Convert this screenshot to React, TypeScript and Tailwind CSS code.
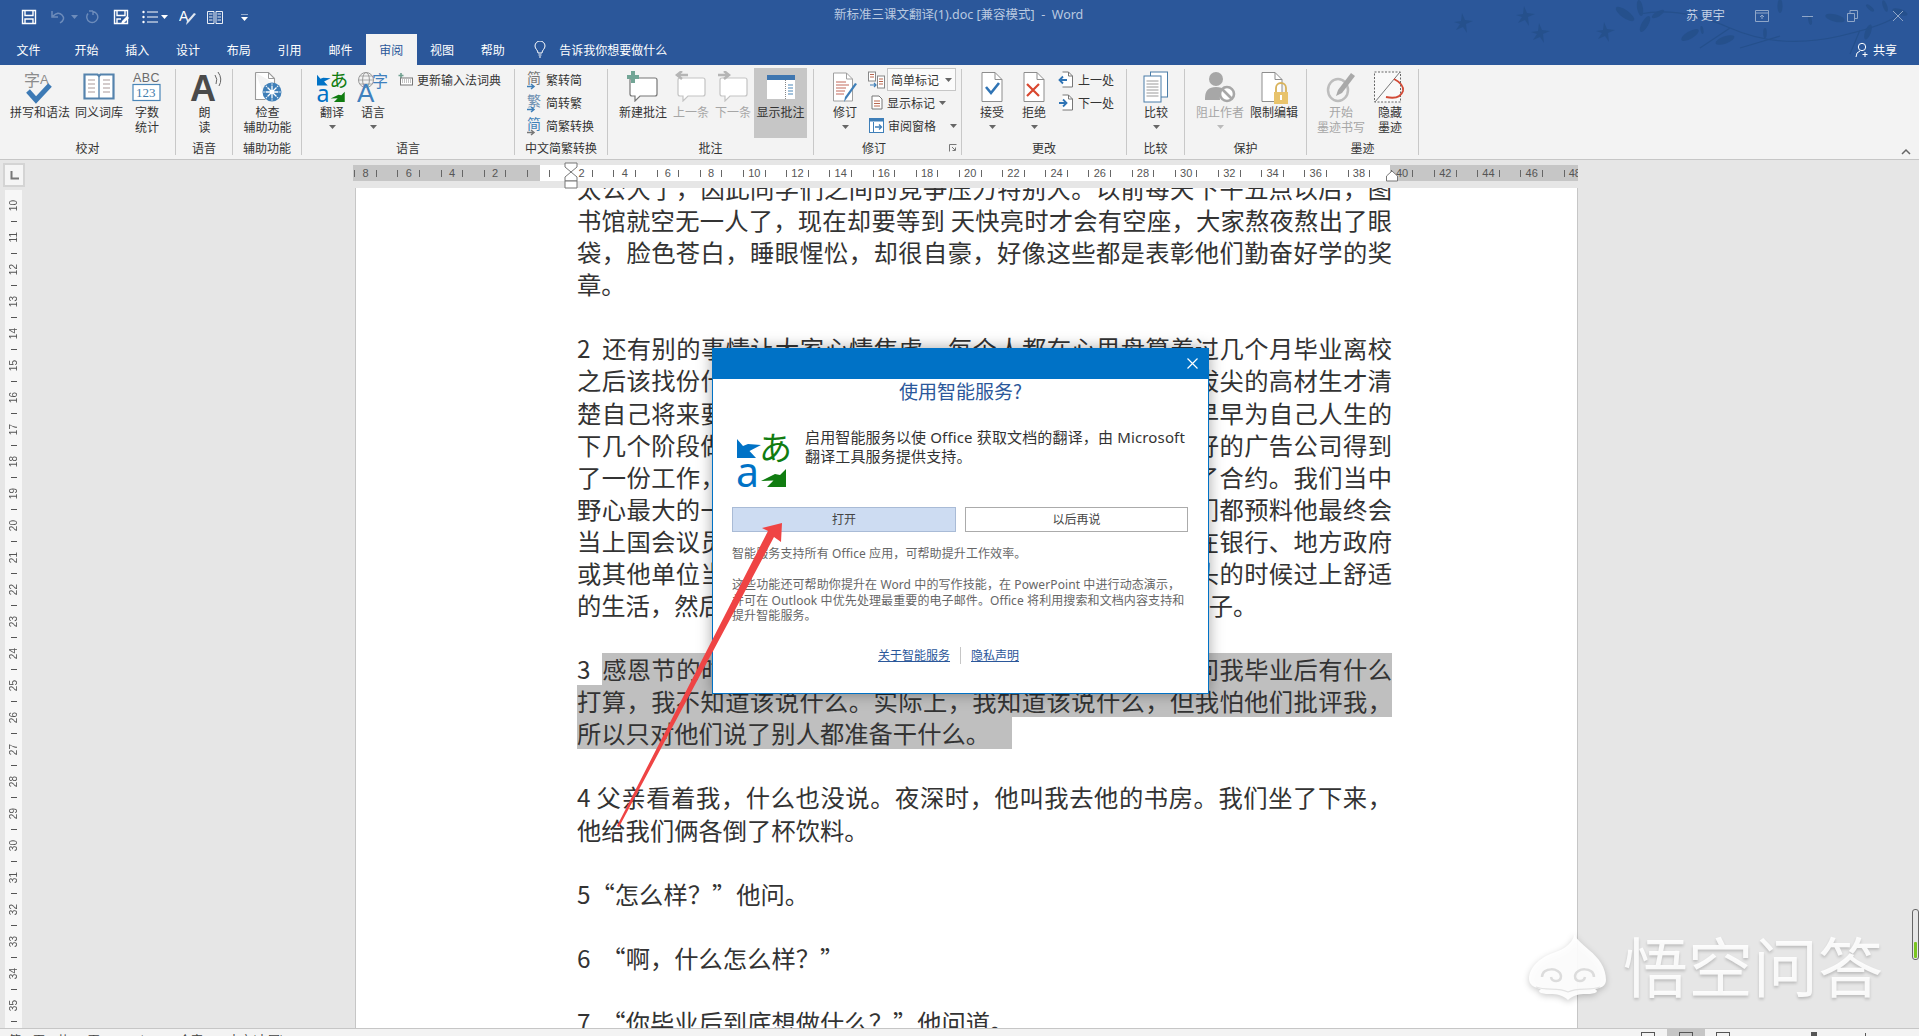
import React from "react";

type SP = { w: number; h: number; children?: React.ReactNode; vb?: string };
const S = ({ w, h, children, vb }: SP) => (
  <svg width={w} height={h} viewBox={vb ?? `0 0 ${w} ${h}`} className="shrink-0 block">{children}</svg>
);
const CJK = "'Noto Sans CJK SC',sans-serif";
const Caret = ({ c = "#666" }: { c?: string }) => (
  <svg width="7" height="4" viewBox="0 0 7 4" className="shrink-0"><path d="M0 0h7L3.5 4z" fill={c} /></svg>
);

/* ---------- ribbon icons ---------- */
const Spell = () => (
  <S w={34} h={33}>
    <text x="1" y="15" fontSize="16" fill="#8c8c8c" fontFamily={CJK}>字</text>
    <text x="17" y="13" fontSize="13" fill="#8c8c8c" fontFamily="'Liberation Sans'">A</text>
    <path d="M5 20l8 9L27 14" stroke="#3d7ab5" strokeWidth="5" fill="none" />
  </S>
);
const Book = () => (
  <S w={32} h={30}>
    <path d="M1.5 3.5h13l1.5 1.5 1.5-1.5h13v24h-29z" fill="#fff" stroke="#5583ad" strokeWidth="2.2" />
    <path d="M16 5v22" stroke="#5583ad" strokeWidth="1.4" />
    <path d="M5 9h7M5 13h7M5 17h7M5 21h7M20 9h7M20 13h7M20 17h7M20 21h7" stroke="#a99" strokeWidth="1.1" />
  </S>
);
const Count = () => (
  <S w={30} h={31}>
    <text x="1" y="11" fontSize="12.500" fill="#6b6b6b" fontFamily="'Liberation Sans'" letterSpacing=".4">ABC</text>
    <rect x="1" y="13.5" width="27" height="16" fill="#fff" stroke="#4a86b8" strokeWidth="1.2" />
    <text x="4" y="26" fontSize="13" fill="#3f7dae" fontFamily="'Liberation Serif'">123</text>
  </S>
);
const ReadAloud = () => (
  <S w={34} h={33}>
    <text x="2" y="30" fontSize="36" fontWeight="700" fill="#4a4a4a" fontFamily="'Liberation Sans'">A</text>
    <path d="M27 4q3 4 1 9M30 1q5 7 1 14" stroke="#666" strokeWidth="1" fill="none" />
  </S>
);
const Access = () => (
  <S w={32} h={32}>
    <path d="M3.5 1.5h13l6 6v5M3.5 1.5v27h10" stroke="#9a9a9a" fill="#fff" strokeWidth="1.1" />
    <path d="M16.5 1.5v6h6" stroke="#9a9a9a" fill="none" />
    <circle cx="20" cy="21" r="9.5" fill="#3f7fb8" />
    <circle cx="20" cy="21" r="2" fill="#fff" />
    <path d="M20 12.5v17M11.5 21h17M14 15l12 12M26 15L14 27" stroke="#fff" strokeWidth="1.3" />
    <circle cx="20" cy="21" r="7" fill="none" stroke="#3f7fb8" strokeWidth="1.2" />
  </S>
);
const Translate = ({ w, h }: { w: number; h: number }) => (
  <S w={w} h={h} vb="0 0 53 55">
    <path d="M0 6v19h19l-6.500-7L24 12 11 11 6 13z" fill="#0072c6" />
    <text x="22" y="27" fontSize="33" fill="#107c10" fontFamily={CJK}>あ</text>
    <text x="-1" y="54" fontSize="41" fill="#0072c6" fontFamily="'Noto Sans'">a</text>
    <path d="M49 36v18H30l6.500-6.500L24 48l14-7 5 1z" fill="#107c10" />
  </S>
);
const Lang = () => (
  <S w={32} h={32}>
    <circle cx="9" cy="9" r="7.5" fill="none" stroke="#999" />
    <ellipse cx="9" cy="9" rx="3.4" ry="7.5" fill="none" stroke="#999" />
    <path d="M1.5 9h15M3 5h12M3 13h12" stroke="#999" strokeWidth=".8" />
    <text x="0" y="31" fontSize="26" fill="#3f80bd" fontFamily="'Liberation Sans'">A</text>
    <text x="15" y="16" fontSize="16" fill="#3f80bd" fontFamily={CJK}>字</text>
  </S>
);
const Keyb = () => (
  <S w={15} h={14}>
    <path d="M3 0v5M.5 2.5h5" stroke="#6f9f8f" strokeWidth="1.6" />
    <rect x="2.5" y="5" width="12" height="7" fill="#fff" stroke="#777" />
    <path d="M4 7h9M4 9h9" stroke="#888" strokeDasharray="1 1" />
  </S>
);
const Conv = ({ t, a, b }: { t: string; a: string; b: string }) => (
  <S w={15} h={20}>
    <text x="0" y="13" fontSize="14" fill={a} fontFamily={CJK}>{t}</text>
    <path d="M0 16.5h6M4 14l3 2.5L4 19" stroke={b} strokeWidth="1.5" fill="none" />
  </S>
);
const Bubble = ({ c = "#8a8a8a", children }: { c?: string; children?: React.ReactNode }) => (
  <S w={34} h={31}>
    <path d="M6 7h23q2 0 2 2v14q0 2-2 2H14l-5 5v-5H6q-2 0-2-2V9q0-2 2-2z" fill="#fff" stroke={c} strokeWidth="1.2" />
    {children}
  </S>
);
const ShowC = () => (
  <S w={30} h={26}>
    <rect x="1" y="1" width="28" height="24" fill="#fff" />
    <rect x="1" y="1" width="28" height="5" fill="#3f76b0" />
    <path d="M19.5 6v19" stroke="#888" strokeDasharray="1 1" />
    <path d="M22 11h5M22 14h5M22 17h5M22 20h5" stroke="#4a86b8" strokeWidth="1.2" />
  </S>
);
const Track = () => (
  <S w={30} h={32}>
    <path d="M3.5 2h13l6 6v22h-19z" fill="#fff" stroke="#a0a0a0" />
    <path d="M16.5 2v6h6" fill="none" stroke="#a0a0a0" />
    <path d="M6 11h10M6 14h13M6 17h10M6 20h9M6 23h8" stroke="#c2685a" strokeWidth="1" />
    <path d="M27 13l-10 14-3 4 1-5 10-14z" fill="#3f7fb8" />
  </S>
);
const Docs = () => (
  <S w={17} h={18}>
    <rect x=".5" y="1" width="7" height="9" fill="#fff" stroke="#888" />
    <rect x="9.5" y="5" width="7" height="12" fill="#fff" stroke="#888" />
    <path d="M2 3.5h4M2 6h4M11 8h4M11 10.500h4M11 13h4" stroke="#b9664f" />
    <path d="M2 14h6M6 12l2 2-2 2" stroke="#3f7fb8" fill="none" strokeWidth="1.2" />
  </S>
);
const DocMini = () => (
  <S w={12} h={15}>
    <path d="M1 1h7l3 3v10H1z" fill="#fff" stroke="#777" />
    <path d="M3 6h6M3 8.500h6M3 11h6" stroke="#b9664f" />
  </S>
);
const Pane = () => (
  <S w={15} h={15}>
    <rect x=".5" y=".5" width="14" height="14" fill="#fff" stroke="#3f7fb8" />
    <rect x=".5" y=".5" width="14" height="3" fill="#3f7fb8" />
    <path d="M4.500 4v10" stroke="#3f7fb8" />
    <path d="M6 9h6M10 6.500 12.500 9 10 11.500" stroke="#3f7fb8" strokeWidth="1.300" fill="none" />
  </S>
);
const DocBig = ({ children }: { children?: React.ReactNode }) => (
  <S w={26} h={32}>
    <path d="M3 1.500h13l7 7v22H3z" fill="#fff" stroke="#8d8d8d" />
    <path d="M16 1.500v7h7" fill="none" stroke="#8d8d8d" />
    {children}
  </S>
);
const DocNav = ({ d }: { d: string }) => (
  <S w={15} h={17}>
    <path d="M4.500 1h6l4 4v11h-10" fill="#fff" stroke="#777" />
    <path d="M10.500 1v4h4" fill="none" stroke="#777" />
    <path d={d} stroke="#2f74b5" strokeWidth="1.800" fill="none" />
  </S>
);
const Compare = () => (
  <S w={26} h={32}>
    <rect x="7.500" y="1" width="17" height="25" fill="#fff" stroke="#4a7da8" />
    <rect x="1" y="5" width="17" height="26" fill="#fff" stroke="#4a7da8" />
    <path d="M3.500 10h12M3.500 13h12M3.500 16h12M3.500 19h12M3.500 22h12M3.500 25h12" stroke="#9a9a9a" />
  </S>
);
const Block = () => (
  <S w={34} h={33}>
    <circle cx="13" cy="8" r="7" fill="#a7a7a7" />
    <path d="M2 27q0-11 11-11 6 0 8 3-5 3-4 10H2z" fill="#a7a7a7" />
    <circle cx="24" cy="23" r="7" fill="#fff" stroke="#a7a7a7" strokeWidth="2.600" />
    <path d="M19 18l10 10" stroke="#a7a7a7" strokeWidth="2.600" />
  </S>
);
const Restrict = () => (
  <S w={30} h={33}>
    <path d="M3 1.500h13l7 7v22H3z" fill="#fff" stroke="#8d8d8d" />
    <path d="M16 1.500v7h7" fill="none" stroke="#8d8d8d" />
    <path d="M17 21v-4a5 5 0 0 1 10 0v4" stroke="#d8b25a" strokeWidth="1.800" fill="none" />
    <rect x="15" y="21" width="14" height="12" fill="#e8c36c" />
    <rect x="21" y="24" width="2" height="5" fill="#fff" />
  </S>
);
const InkStart = () => (
  <S w={30} h={33}>
    <ellipse cx="12" cy="19" rx="10" ry="11" fill="none" stroke="#bdbdbd" strokeWidth="2.500" />
    <path d="M25 2l4 3-13 17-6 3 2-6z" fill="#a9a9a9" />
  </S>
);
const InkHide = () => (
  <S w={32} h={33}>
    <rect x=".5" y="1" width="26" height="30" fill="#f9f9f9" stroke="#666" strokeDasharray="2 1.500" />
    <path d="M26 1L1 31" stroke="#777" />
    <path d="M20 8q10 5 9 12-3 9-17 6" fill="none" stroke="#d24a36" strokeWidth="1.800" />
  </S>
);

/* ---------- ribbon parts ---------- */
const Big = ({ w, icon, l1, l2, caret, dim, hot }: { w: number; icon: React.ReactNode; l1: string; l2?: string; caret?: boolean; dim?: boolean; hot?: boolean }) => (
  <div className={`flex flex-col items-center shrink-0 ${dim ? "text-[#a6a6a6]" : "text-[#333]"} ${hot ? "bg-[#c6c6c6] -mt-[1px] h-[70px] pt-[1px]" : ""}`} style={{ width: w }}>
    <div className="h-[35px] pt-[2px] flex items-start justify-center">{icon}</div>
    <div className="h-[15px] leading-[15px] text-[12px] whitespace-nowrap">{l1}</div>
    {l2 ? <div className="h-[15px] leading-[15px] text-[12px] whitespace-nowrap">{l2}</div> : null}
    {caret ? <div className="h-[15px] flex items-center justify-center"><Caret c={dim ? "#bbb" : "#666"} /></div> : null}
  </div>
);
const Small = ({ icon, label, ml = 0, gap = 4 }: { icon: React.ReactNode; label: string; ml?: number; gap?: number }) => (
  <div className="h-[23px] flex items-center text-[12px] text-[#333] whitespace-nowrap" style={{ marginLeft: ml, gap }}>
    {icon}
    <span>{label}</span>
  </div>
);
const Group = ({ w, label, children, pl = 0, launcher }: { w: number; label: string; children: React.ReactNode; pl?: number; launcher?: boolean }) => (
  <div className="h-[86px] border-r border-[#c8c8c8] flex flex-col shrink-0" style={{ width: w }}>
    <div className="h-[70px] flex" style={{ paddingLeft: pl }}>{children}</div>
    <div className="h-[16px] flex items-center text-[12px] text-[#333] leading-[16px] pt-[2px]">
      <span className={`flex-1 text-center whitespace-nowrap ${launcher ? "pr-[15px]" : ""}`}>{label}</span>
      {launcher ? (
        <svg width="8" height="8" viewBox="0 0 8 8" className="mr-[4px] shrink-0"><path d="M.5 7.500v-7h7M3 3l3 3M3.500 6.500h3v-3" fill="none" stroke="#777" /></svg>
      ) : null}
    </div>
  </div>
);

/* ---------- title bar ---------- */
const Q = ({ w, children }: { w: number; children: React.ReactNode }) => (
  <div className="flex justify-center items-center shrink-0" style={{ width: w }}>{children}</div>
);
const leaves: [number, number, number, number][] = [
  [1625, 14, 22, 35], [1640, 8, 16, 80], [1645, 24, 18, 120], [1658, 14, 14, 150], [1690, 35, 20, 150], [1702, 30, 8, 80],
  [1725, 40, 20, 160], [1765, 33, 10, 90], [1780, 6, 14, 90], [1810, 20, 10, 80], [1835, 18, 20, 15], [1868, 32, 16, 110],
  [1870, 8, 10, 40], [1885, 6, 12, 70], [1900, 12, 16, 20],
];
const TitleArt = () => (
  <svg width="1919" height="65" viewBox="0 0 1919 65" className="absolute left-0 top-0 pointer-events-none">
    <g fill="#25508c">
      {[[1463, 23], [1525, 16], [1540, 33], [1605, 32]].map(([x, y], i) => (
        <path key={i} transform={`translate(${x} ${y})`} d="M-1-10l3 7 8 1-7 3 1 9-4-6-7 3 4-6-6-2 7-1z" />
      ))}
      {leaves.map(([x, y, l, r], i) => (
        <ellipse key={i} cx={x} cy={y} rx={l / 2} ry={l / 5.500} transform={`rotate(${r} ${x} ${y})`} />
      ))}
    </g>
    <path d="M1640 14q40-8 90 14t110 8 60-26M1730 28l-30 20M1780 36l-40 12M1860 30l-10 24" fill="none" stroke="#25508c" strokeWidth="1.200" />
  </svg>
);
const tabs = ["开始", "插入", "设计", "布局", "引用", "邮件", "审阅", "视图", "帮助"];

/* ---------- rulers ---------- */
const Tick = () => <span className="w-[1px] h-[7px] bg-[#666] shrink-0" />;
const cells = Array.from({ length: 29 }, (_, i) => -8 + i * 2);
const vcells = Array.from({ length: 26 }, (_, i) => 10 + i);

/* ---------- document ---------- */
const J = ({ children }: { children: React.ReactNode }) => (
  <div className="h-[32.08px] leading-[32.08px] overflow-hidden w-[815px] whitespace-nowrap [text-align-last:justify]">{children}</div>
);
const L = ({ children }: { children?: React.ReactNode }) => (
  <div className="h-[32.08px] leading-[32.08px] overflow-hidden w-[815px] whitespace-nowrap">{children}</div>
);
const sel = "bg-[#bfbfbf]";
const StatusIcon = () => <span className="w-[14px] h-[8px] mt-[3px] border border-[#555] shrink-0" />;

export default function App() {
  return (
    <div className="relative w-[1919px] h-[1036px] overflow-hidden flex flex-col bg-[#e6e6e6] [font-family:'Noto_Sans_CJK_SC',sans-serif]">
      {/* title + tabs */}
      <div className="relative h-[65px] bg-[#2b579a] shrink-0">
        <TitleArt />
        <div className="relative h-[34px] flex items-center text-[12px] text-[#b9c9e0]">
          <div className="w-[19px] shrink-0" />
          <Q w={19}>
            <svg width="16" height="16" viewBox="0 0 16 16"><path d="M1.500 1.500h13v13h-13zM4 1.500v5h8v-5M4 14.500V10h8v4.500" fill="none" stroke="#fff" strokeWidth="1.400" /></svg>
          </Q>
          <div className="w-[10px] shrink-0" />
          <Q w={19}>
            <svg width="16" height="14" viewBox="0 0 16 14"><path d="M3 6q5-5 9-1t-2 8M2 1v6h6" fill="none" stroke="#6d8cbb" strokeWidth="1.500" /></svg>
          </Q>
          <div className="w-[4px] shrink-0" /><Caret c="#6d8cbb" />
          <div className="w-[4px] shrink-0" />
          <Q w={19}>
            <svg width="14" height="14" viewBox="0 0 14 14"><path d="M8 1.500a5.500 5.500 0 1 1-5 2M8 1v4M8 1H4" fill="none" stroke="#6d8cbb" strokeWidth="1.400" /></svg>
          </Q>
          <div className="w-[10px] shrink-0" />
          <Q w={19}>
            <svg width="16" height="16" viewBox="0 0 16 16"><path d="M1.500 1.500h13v13h-13zM4 1.500v5h8v-5M4 14.500V10h4" fill="none" stroke="#fff" strokeWidth="1.400" /><path d="M8 15l1-3 5-5 2 2-5 5z" fill="#fff" /></svg>
          </Q>
          <div className="w-[10px] shrink-0" />
          <Q w={19}>
            <svg width="16" height="14" viewBox="0 0 16 14"><path d="M5 2h11M5 7h11M5 12h11" stroke="#fff" /><circle cx="1.500" cy="2" r="1.200" fill="#fff" /><circle cx="1.500" cy="7" r="1.200" fill="#fff" /><circle cx="1.500" cy="12" r="1.200" fill="#fff" /></svg>
          </Q>
          <div className="w-[2px] shrink-0" /><Caret c="#fff" />
          <div className="w-[10px] shrink-0" />
          <Q w={20}>
            <svg width="18" height="17" viewBox="0 0 18 17"><text x="0" y="12" fontSize="14" fill="#fff" fontFamily="'Liberation Sans'">A</text><path d="M17 5l-7 8-3 3 1-4 7-8z" fill="#dfe6f0" /></svg>
          </Q>
          <div className="w-[8px] shrink-0" />
          <Q w={18}>
            <svg width="16" height="13" viewBox="0 0 16 13"><path d="M.5.500h6.500v12H.5zM9 .500h6.500v12H9zM2 3h3.500M2 6h3.500M2 9h3.500M10.500 3H14M10.500 6H14M10.500 9H14" fill="none" stroke="#fff" strokeWidth=".9" /></svg>
          </Q>
          <div className="w-[16px] shrink-0" />
          <Q w={8}>
            <svg width="7" height="7" viewBox="0 0 7 7"><path d="M0 0h7" stroke="#fff" /><path d="M0 3h7L3.500 7z" fill="#fff" /></svg>
          </Q>
          <div className="w-[586px] shrink-0" />
          <div className="w-[249px] shrink-0 -mt-[4px] text-center whitespace-nowrap text-[12.5px] [font-family:'Noto_Sans','Noto_Sans_CJK_SC',sans-serif]">新标准三课文翻译(1).doc [兼容模式]&nbsp; -&nbsp; Word</div>
          <div className="w-[603px] shrink-0" />
          <div className="w-[41px] shrink-0 -mt-[4px] whitespace-nowrap text-[#c6d3e6]">苏 更宇</div>
          <div className="w-[28px] shrink-0" />
          <div className="flex items-center shrink-0 -mt-[2px]">
            <Q w={14}>
              <svg width="14" height="12" viewBox="0 0 14 12"><path d="M.5.500h13v11H.5zM.5 3h13M5 7l2-2 2 2M7 5v4" fill="none" stroke="#8fa6c8" /></svg>
            </Q>
            <div className="w-[32px] shrink-0" />
            <Q w={12}><div className="w-[11px] h-[1px] bg-[#8fa6c8]" /></Q>
            <div className="w-[33px] shrink-0" />
            <Q w={12}>
              <svg width="11" height="12" viewBox="0 0 11 12"><path d="M.5 3.500h7v8h-7zM3 3.500V.5h7.500v8H7.500" fill="none" stroke="#8fa6c8" /></svg>
            </Q>
            <div className="w-[34px] shrink-0" />
            <Q w={12}>
              <svg width="12" height="12" viewBox="0 0 12 12"><path d="M1 1l10 10M11 1L1 11" stroke="#8fa6c8" /></svg>
            </Q>
          </div>
        </div>
        <div className="relative h-[31px] flex text-[12px] text-white leading-[31px]">
          <div className="w-[3px] shrink-0" />
          <div className="w-[51px] text-center">文件</div>
          <div className="w-[7px] shrink-0" />
          {tabs.map((t) => (
            <div key={t} className={`w-[50.8px] shrink-0 text-center ${t === "审阅" ? "bg-[#f3f3f3] text-[#2b579a]" : ""}`}>{t}</div>
          ))}
          <div className="w-[16px] shrink-0" />
          <div className="flex items-center gap-[13px] whitespace-nowrap">
            <svg width="12" height="17" viewBox="0 0 12 17"><path d="M4 12c0-3-3-4-3-7a5 5 0 0 1 10 0c0 3-3 4-3 7zM4.500 14h3M5 16h2" fill="none" stroke="#fff" strokeWidth="1" /></svg>
            <span>告诉我你想要做什么</span>
          </div>
          <div className="ml-auto flex items-center gap-[4px] pr-[22px]">
            <svg width="14" height="16" viewBox="0 0 14 16"><circle cx="7" cy="5" r="3.700" fill="none" stroke="#fff" /><path d="M1 15q0-5 4-6M10 10v5M7.500 12.500h5" fill="none" stroke="#fff" /></svg>
            <span>共享</span>
          </div>
        </div>
      </div>

      {/* ribbon */}
      <div className="h-[95px] shrink-0 bg-[#f3f3f3] border-b border-[#c6c6c6] flex pt-[4px] relative">
        <Group w={176} label="校对" pl={8}>
          <Big w={64} icon={<Spell />} l1="拼写和语法" />
          <Big w={54} icon={<Book />} l1="同义词库" />
          <Big w={42} icon={<Count />} l1="字数" l2="统计" />
        </Group>
        <Group w={57} label="语音"><Big w={57} icon={<ReadAloud />} l1="朗" l2="读" /></Group>
        <Group w={69} label="辅助功能"><Big w={69} icon={<Access />} l1="检查" l2="辅助功能" /></Group>
        <Group w={213} label="语言" pl={8}>
          <Big w={44} icon={<Translate w={30} h={32} />} l1="翻译" caret />
          <Big w={38} icon={<Lang />} l1="语言" caret />
          <div className="pl-[6px] -mt-[1px]">
            <Small icon={<Keyb />} label="更新输入法词典" gap={4} />
          </div>
        </Group>
        <Group w={93} label="中文简繁转换" pl={12}>
          <div className="flex flex-col -mt-[1px]">
            <Small icon={<Conv t="简" a="#777" b="#3f7fb8" />} label="繁转简" />
            <Small icon={<Conv t="繁" a="#6c8fb0" b="#3f7fb8" />} label="简转繁" />
            <Small icon={<Conv t="简" a="#3f7fb8" b="#777" />} label="简繁转换" />
          </div>
        </Group>
        <Group w={206} label="批注" pl={10}>
          <Big w={50} l1="新建批注" icon={<Bubble c="#777"><path d="M7 0v12M1 6h12" stroke="#72a596" strokeWidth="4" /></Bubble>} />
          <Big w={46} dim l1="上一条" icon={<Bubble c="#c4c4c4"><path d="M14 4H3M8 0L3 4l5 4" stroke="#b5b5b5" strokeWidth="2.500" fill="none" /></Bubble>} />
          <Big w={38} dim l1="下一条" icon={<Bubble c="#c4c4c4"><path d="M2 4h11M8 0l5 4-5 4" stroke="#b5b5b5" strokeWidth="2.500" fill="none" /></Bubble>} />
          <div className="w-[2px] shrink-0" />
          <Big w={53} hot l1="显示批注" icon={<div className="pt-[3px]"><ShowC /></div>} />
        </Group>
        <Group w={148} label="修订" pl={11} launcher>
          <Big w={40} icon={<Track />} l1="修订" caret />
          <div className="flex flex-col pl-[3px] -mt-[1px]">
            <div className="h-[23px] flex items-center">
              <Docs />
              <div className="ml-[2px] w-[69px] h-[23px] bg-[#fbfbfb] border border-[#c6c6c6] flex items-center pl-[3px] text-[12px] text-[#333] whitespace-nowrap gap-[6px]">
                <span>简单标记</span><Caret />
              </div>
            </div>
            <div className="h-[23px] flex items-center text-[12px] text-[#333] whitespace-nowrap pl-[3px] gap-[4px]">
              <DocMini /><span>显示标记</span><Caret />
            </div>
            <div className="h-[23px] flex items-center text-[12px] text-[#333] whitespace-nowrap pl-[1px] gap-[4px]">
              <Pane /><span>审阅窗格</span><span className="w-[6px]" /><Caret />
            </div>
          </div>
        </Group>
        <Group w={165} label="更改" pl={10}>
          <Big w={40} caret l1="接受" icon={<DocBig><path d="M7 16l5 6 8-10" fill="none" stroke="#2f74b5" strokeWidth="2.600" /></DocBig>} />
          <Big w={44} caret l1="拒绝" icon={<DocBig><path d="M6 13l12 12M18 13L6 25" fill="none" stroke="#d9472f" strokeWidth="2.200" /></DocBig>} />
          <div className="flex flex-col pl-[2px] -mt-[1px]">
            <Small gap={5} icon={<DocNav d="M9 9H2M5 5.500 1.500 9 5 12.500" />} label="上一处" />
            <Small gap={5} icon={<DocNav d="M1 9h7M5 5.500 8.500 9 5 12.500" />} label="下一处" />
          </div>
        </Group>
        <Group w={58} label="比较"><Big w={58} icon={<Compare />} l1="比较" caret /></Group>
        <Group w={122} label="保护" pl={5}>
          <Big w={60} dim caret icon={<Block />} l1="阻止作者" />
          <Big w={48} icon={<Restrict />} l1="限制编辑" />
        </Group>
        <Group w={112} label="墨迹" pl={8}>
          <Big w={52} dim icon={<InkStart />} l1="开始" l2="墨迹书写" />
          <Big w={46} icon={<InkHide />} l1="隐藏" l2="墨迹" />
        </Group>
        <div className="ml-auto mr-[8px] self-end mb-[4px]">
          <svg width="10" height="7" viewBox="0 0 10 7"><path d="M1 6l4-4 4 4" fill="none" stroke="#666" strokeWidth="1.500" /></svg>
        </div>
      </div>

      {/* horizontal ruler */}
      <div className="h-[28px] shrink-0 flex items-start">
        <div className="ml-[3px] mt-[3px] w-[22px] h-[24px] bg-[#f5f5f5] border-[2px] border-[#d4d4d4] flex items-center justify-center shrink-0">
          <svg width="9" height="9" viewBox="0 0 9 9"><path d="M1.500 0v7.500H9" fill="none" stroke="#777" strokeWidth="2" /></svg>
        </div>
        <div className="ml-[328px] mt-[5px] w-[1225px] h-[16px] overflow-hidden flex bg-[linear-gradient(to_right,#c6c6c6_187px,#fff_187px,#fff_1037px,#c6c6c6_1037px)]">
          <div className="flex -ml-[9px] shrink-0">
            {cells.map((n) => (
              <div key={n} className="w-[43.2px] shrink-0 px-[10.3px] flex items-center justify-between text-[11px] leading-[16px] text-[#555] [font-family:'Liberation_Sans',sans-serif]">
                <Tick />
                <span>{n === 0 ? "" : Math.abs(n)}</span>
                <Tick />
              </div>
            ))}
          </div>
        </div>
      </div>
      {/* indent markers */}
      <svg width="18" height="28" viewBox="0 0 18 28" className="absolute left-[562px] top-[162px]">
        <path d="M3 1h12v4l-6 5-6-5z" fill="#fff" stroke="#777" />
        <path d="M9 10l6 5v4H3v-4z" fill="#fff" stroke="#777" />
        <path d="M3 19h12v7H3z" fill="#fff" stroke="#777" />
      </svg>
      <svg width="14" height="12" viewBox="0 0 14 12" className="absolute left-[1385px] top-[170px]">
        <path d="M7 1l5.500 5v5H1.500V6z" fill="#fff" stroke="#777" />
      </svg>

      {/* main */}
      <div className="flex-1 min-h-0 flex overflow-hidden">
        <div className="w-[5px] shrink-0" />
        <div className="w-[17px] shrink-0 mt-[2px] bg-[#f7f7f7] pt-[5px] flex flex-col">
          {vcells.map((n) => (
            <div key={n} className="h-[32px] shrink-0 flex flex-col items-center justify-around text-[10px] leading-[12px] text-[#555] [font-family:'Liberation_Sans',sans-serif]">
              <span className="[writing-mode:vertical-rl] rotate-180">{n}</span>
              <span className="w-[6px] h-[1px] bg-[#555]" />
            </div>
          ))}
        </div>
        <div className="w-[333px] shrink-0" />
        <div className="w-[1223px] shrink-0 bg-white border-x border-[#c6c6c6] pl-[221px] text-[24.3px] text-[#333]">
          <div className="-mt-[16px]">
            <J>太公大了，因此同学们之间的竞争压力特别大。以前每天下午五点以后，图</J>
            <J>书馆就空无一人了，现在却要等到 天快亮时才会有空座，大家熬夜熬出了眼</J>
            <J>袋，脸色苍白，睡眼惺忪，却很自豪，好像这些都是表彰他们勤奋好学的奖</J>
            <L>章。</L>
            <L />
            <J>2&nbsp;&nbsp;还有别的事情让大家心情焦虑，每个人都在心里盘算着过几个月毕业离校</J>
            <J>之后该找份什么样的工作。即便是我们当中那些成绩最最拔尖的高材生才清</J>
            <J>楚自己将来要做什么。有人雄心勃勃，有人踏实肯干，都早早为自己人生的</J>
            <J>下几个阶段做好了规划。我有个好朋友已经在纽约一家很好的广告公司得到</J>
            <J>了一份工作，还有一个朋友也已经和纽约的一家出版社签了合约。我们当中</J>
            <J>野心最大的一个朋友已经考上了一所很有名的法学院，我们都预料他最终会</J>
            <J>当上国会议员。另外几个朋友们都不想离开家乡，打算去在银行、地方政府</J>
            <J>或其他单位当差，盼着能安安稳稳地一直工作到四十岁出头的时候过上舒适</J>
            <L>的生活，然后到了一定的年纪再回到家乡安度晚年过舒心日子。</L>
            <L />
            <J>3&nbsp;&nbsp;<span className={sel}>感恩节的时候我回了趟家，亲戚朋友们围坐在一起都来问我毕业后有什么</span></J>
            <J><span className={sel}>打算，我不知道该说什么。实际上，我知道该说什么，但我怕他们批评我，</span></J>
            <L><span className={`${sel} pr-[22px]`}>所以只对他们说了别人都准备干什么。</span></L>
            <L />
            <J>4 父亲看着我，什么也没说。夜深时，他叫我去他的书房。我们坐了下来，</J>
            <L>他给我们俩各倒了杯饮料。</L>
            <L />
            <L>5“怎么样？”他问。</L>
            <L />
            <L>6&nbsp;&nbsp;“啊，什么怎么样？”</L>
            <L />
            <L>7&nbsp;&nbsp;“你毕业后到底想做什么？”他问道。</L>
          </div>
        </div>
      </div>

      {/* status bar */}
      <div className="h-[8px] shrink-0 bg-[#f3f3f3] border-t border-[#c6c6c6] overflow-hidden flex text-[12px] text-[#444] leading-[16px] pl-[9px]">
        <span className="w-[116px] pt-[3px] shrink-0 whitespace-nowrap">第 1 页，共 26 页</span>
        <span className="w-[103px] pt-[3px] shrink-0 whitespace-nowrap">32/34447 个字</span>
        <span className="w-[1413px] pt-[3px] shrink-0 whitespace-nowrap">中文(中国)</span>
        <StatusIcon />
        <span className="w-[12px] shrink-0" />
        <span className="w-[38px] shrink-0 bg-[#c6c6c6] flex justify-center"><StatusIcon /></span>
        <span className="w-[11px] shrink-0" />
        <StatusIcon />
        <span className="w-[81px] shrink-0" />
        <span className="w-[6px] h-[8px] mt-[3px] bg-[#555] shrink-0" />
        <span className="w-[45px] shrink-0" />
        <span className="w-[6px] h-[8px] mt-[4px] flex justify-center shrink-0"><span className="w-[1px] h-[8px] bg-[#555]" /></span>
        <span className="w-[12px] shrink-0" />
        <span className="pt-[3px] whitespace-nowrap">154%</span>
      </div>

      {/* scroll indicator */}
      <div className="absolute left-[1912px] top-[909px] w-[7px] h-[51px] rounded-[3px] border border-[#666] bg-[#e6e6e6] flex flex-col justify-end p-[1px]">
        <div className="h-[16px] bg-[#7ac520] rounded-[1px]" />
      </div>

      {/* dialog */}
      <div className="absolute left-[712px] top-[348px] w-[497px] h-[346px] bg-white border-x border-b border-[#0072c6] shadow-[0_0_14px_rgba(0,0,0,0.35)] flex flex-col">
        <div className="h-[31px] bg-[#0072c6] flex items-center justify-end pr-[10px] shrink-0">
          <svg width="11" height="11" viewBox="0 0 11 11"><path d="M.5.500l10 10M10.500.500l-10 10" stroke="#fff" strokeWidth="1.200" /></svg>
        </div>
        <div className="h-[26px] leading-[24px] text-[19px] text-[#2b579a] text-center">使用智能服务?</div>
        <div className="flex pl-[24px] pt-[28px] h-[83px]">
          <Translate w={53} h={55} />
          <div className="ml-[15px] -mt-[5px] text-[15px] leading-[19px] text-[#333] tracking-[0.15px] whitespace-nowrap [font-family:'Noto_Sans','Noto_Sans_CJK_SC',sans-serif]">
            <div>启用智能服务以使 Office 获取文档的翻译，由 Microsoft</div>
            <div>翻译工具服务提供支持。</div>
          </div>
        </div>
        <div className="flex pl-[19px] gap-[9px] mt-[19px]">
          <div className="w-[224px] h-[25px] bg-[#cddcf2] border border-[#a9bbd6] text-center text-[12px] leading-[21px] text-[#444]">打开</div>
          <div className="w-[223px] h-[25px] bg-white border border-[#ababab] text-center text-[12px] leading-[21px] text-[#444]">以后再说</div>
        </div>
        <div className="pl-[19px] text-[12px] text-[#666] tracking-[0.1px] whitespace-nowrap [font-family:'Noto_Sans','Noto_Sans_CJK_SC',sans-serif]">
          <div className="mt-[14px] leading-[16px]">智能服务支持所有 Office 应用，可帮助提升工作效率。</div>
          <div className="mt-[15px] leading-[15.500px]">
            <div>这些功能还可帮助你提升在 Word 中的写作技能，在 PowerPoint 中进行动态演示，</div>
            <div>并可在 Outlook 中优先处理最重要的电子邮件。Office 将利用搜索和文档内容支持和</div>
            <div>提升智能服务。</div>
          </div>
        </div>
        <div className="flex items-center pl-[165px] mt-[23px] h-[17px] text-[12px] text-[#2b579a] whitespace-nowrap">
          <span className="underline">关于智能服务</span>
          <span className="w-[1px] h-[17px] bg-[#c6c6c6] mx-[10px]" />
          <span className="underline">隐私声明</span>
        </div>
      </div>

      {/* annotation arrow */}
      <svg width="1919" height="1036" viewBox="0 0 1919 1036" className="absolute left-0 top-0 pointer-events-none">
        <path d="M782 523l-1 19-7-5L619 827l-2-1 151-295-6-3z" fill="#ef4444" />
      </svg>

      {/* watermark */}
      <div className="absolute left-[1528px] top-[928px] flex items-center pointer-events-none">
        <svg width="80" height="72" viewBox="0 0 80 72" className="drop-shadow-[0_2px_3px_rgba(0,0,0,0.22)]">
          <path d="M47 2c-2 8 6 12 14 20 10 8 17 18 17 30 0 6-5 8-11 9 3 2 2 3 0 4-7 2-13 0-18 2-4 1-7 3-9 5-2-2-5-4-9-5-5-2-11 0-18-2-2-1-3-2 0-4C7 60 1 57 1 51c0-12 12-22 24-26C37 21 47 14 47 2z" fill="#fff" fillOpacity=".92" />
          <path d="M14 49c0-10 18-10 19-1 0 6-9 7-10 1M66 49c0-10-18-10-19-1 0 6 9 7 10 1" fill="none" stroke="#dcdcdc" strokeWidth="2.500" />
          <path d="M8 59c10 4 22 0 32 5 10-5 22-1 32-5" fill="none" stroke="#e2e2e2" strokeWidth="1.200" />
        </svg>
        <div className="ml-[15px] text-[65px] leading-[72px] font-normal text-white/90 whitespace-nowrap [text-shadow:0_2px_3px_rgba(0,0,0,0.18)]">悟空问答</div>
      </div>
    </div>
  );
}
